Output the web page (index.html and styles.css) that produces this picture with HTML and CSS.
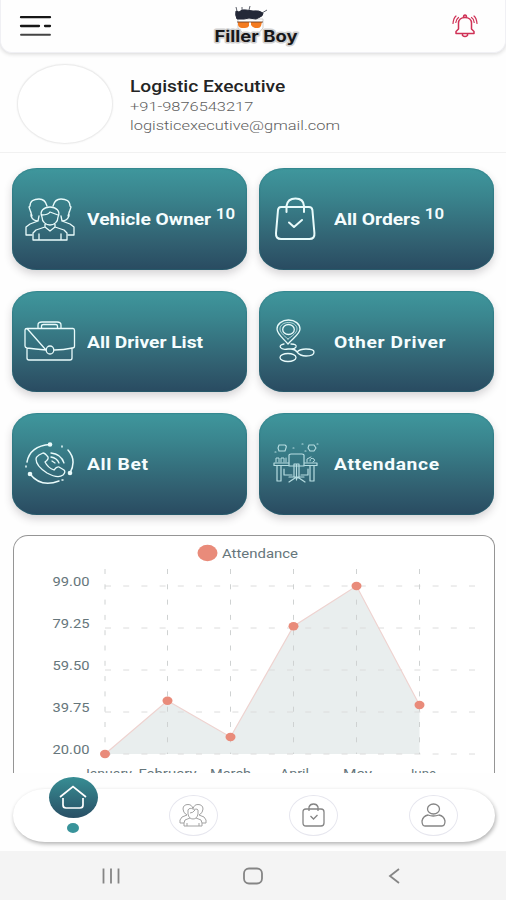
FILE: index.html
```
<!DOCTYPE html>
<html lang="en">
<head>
    <title>Filler Boy</title>
    <meta charset="UTF-8">
    <meta name="viewport" content="width=device-width, initial-scale=1">
    <link rel="stylesheet" href="styles.css">
</head>
<body>
    <div class="screen">
        <header class="header">
            <svg class="menu" width="34" height="24" viewBox="0 0 34 24">
                <path d="M2 3.2H31M2 12H20M26 12H31" stroke="#171717" stroke-width="2.3" stroke-linecap="round"/>
                <path d="M2 20.8H31" stroke="#444" stroke-width="1.9" stroke-linecap="round"/>
            </svg>
            <svg class="logo" width="96" height="46" viewBox="0 0 96 46">
                <path d="M32 16h25v9l-6 7H39l-7-7z" fill="#fff" stroke="#d0d0d0"/>
                <path d="M31 16q-2-4-1-8l3 1q3-3 7-2l7 1q6-1 10 2 0 3-3 4l-4 2-7-1-5 1z" fill="#242938" stroke="#242938" stroke-linejoin="round"/>
                <path d="M31 8l-1-4M36 7V4M43 7l1-4M56 10l5-3" stroke="#4a4e59" stroke-width=".9"/>
                <path d="M32 19h11v4q-1 2-4 2h-3q-3 0-4-3zM45 19h11l-1 4q-1 2-3 2h-3q-3-1-4-3z" fill="#f47b20"/>
                <path d="M31 19H57" stroke="#704126" stroke-width=".9"/>
                <text class="logo-text" x="8.500" y="39" textLength="83" lengthAdjust="spacingAndGlyphs">Filler Boy</text>
            </svg>
            <svg class="bell" width="28" height="26" viewBox="0 0 28 26" fill="none" stroke="#cf3156" stroke-width="1.500" stroke-linecap="round" stroke-linejoin="round">
                <path d="M5 20.500V18.500l2.500-2.500v-6c0-3 2.500-5.500 6.500-5.500s6.500 2.500 6.500 5.500v6l2.500 2.500v2zM12.500 4.500q0-2.500 1.500-2.500t1.500 2.500M11.500 21v1.500q2.500 2 5 0V21"/>
                <path d="M5 3Q2.500 5 2 10.500M7.500 4.500Q5 6.500 4.800 9.500M23 3q2.500 2 3 7.500M20.500 4.500q2.500 1.500 2.700 5" stroke-width="1.200"/>
            </svg>
        </header>

        <section class="profile">
            <div class="avatar"></div>
            <div class="profile-info">
                <div class="name">Logistic Executive</div>
                <div class="contact">+91-9876543217</div>
                <div class="contact">logisticexecutive@gmail.com</div>
            </div>
        </section>

        <main class="tiles">
            <div class="tile">
                <svg class="tile-icon" width="52" height="44" viewBox="0 0 52 44">
                    <path d="M15 19l-1 5-8 3-4 3v8h6M8 19l-2-6-1-3 1-1c0-5 4-7 9-7 5 0 7 3 8 7M7 15v4q2 5 7 5M45 15v4q-2 5-7 5M37 19l1 5 8 3 4 3v8h-6M44 19l2-6 1-3-1-1c0-5-4-7-9-7-5 0-7 3-8 7"/>
                    <path d="M18 20c-3-6 2-10 8-10s11 4 8 10c0 5-4 8-8 8s-8-3-8-8zM18 18q6 0 8-3l8 3M21 27v3l-9 3-3 3v7h34v-7l-3-3-9-3v-3M21 30l5 4 5-4M15 43v-6M37 43v-6"/>
                </svg>
                <div class="tile-label"><span>Vehicle Owner</span><sup>10</sup></div>
            </div>
            <div class="tile">
                <svg class="tile-icon bag" width="52" height="44" viewBox="0 0 52 44">
                    <path d="M10 10h28q3 0 3.400 3l2 23q.6 6-5 6H10q-5.500 0-5-6l2-23q.4-3 3-3zM15.500 15V9q1-7.500 9-7.500T33 9v6M18 25.500l5 4.500 8-7"/>
                </svg>
                <div class="tile-label"><span>All Orders</span><sup>10</sup></div>
            </div>
            <div class="tile">
                <svg class="tile-icon" width="52" height="44" viewBox="0 0 52 44">
                    <path d="M3 9.500h46q1.500 0 1.500 2V27q0 2-2 2-9 2-18 2M22 31Q11 30 3 29q-2-.5-2-2V11q0-1.500 2-1.500zM3 30v9q0 2 2 2h41q2 0 2-2V29"/>
                    <path d="M14 9V6q0-3 4-3h15q4 0 4 3v3M17.500 9V7q0-1.500 2-1.500h12q2 0 2 1.500v2"/>
                    <ellipse cx="26" cy="31" rx="3.800" ry="4"/>
                </svg>
                <div class="tile-label"><span>All Driver List</span></div>
            </div>
            <div class="tile">
                <svg class="tile-icon" width="52" height="44" viewBox="0 0 52 44">
                    <path d="M17 25C12 19 6 15 6 10c0-5 5-9 11.500-9S29 5 29 10c0 5-7 9-12 15z"/>
                    <path d="M17 20C12 16 9 13 9 10c0-4 4-6.500 8.500-6.500S26 6 26 10c0 4-5 7-9 10z" stroke-width=".7"/>
                    <ellipse cx="17.500" cy="10.500" rx="5.800" ry="5"/>
                    <path d="M13 25q-5 1-3.500 3.500T17 30h3q4 0 6 3M20 25q6 0 5 3-1 2-5 2M26 33q3-3 9-3 8 0 8 3 0 4-8 4-6 0-9-4z"/>
                    <ellipse cx="17" cy="38.500" rx="8" ry="4"/>
                </svg>
                <div class="tile-label"><span class="wide">Other Driver</span></div>
            </div>
            <div class="tile">
                <svg class="tile-icon" width="52" height="44" viewBox="0 0 52 44">
                    <path d="M3 20Q6 4 26 2.500M44 8q9 10 2 23M35 39Q17 46 6 32M2 24v1M38 4v1M38 38h1" stroke-width="1.500"/>
                    <path d="M15 13l4-2q2 0 5 4 1 2-3 5 3 6 9 8 3-4 5-3l5 3q2 2-1 5-5 4-16-2-11-7-11-14 0-2 3-4zM27 11q10 1 13 10M27 15q6 1 8 6M28 19l3 2"/>
                    <g class="solid"><circle cx="26" cy="2.500" r="2.300"/><circle cx="46" cy="31" r="2.300"/><circle cx="6" cy="32" r="2.300"/></g>
                </svg>
                <div class="tile-label"><span class="wide">All Bet</span></div>
            </div>
            <div class="tile">
                <svg class="tile-icon desk" width="52" height="44" viewBox="0 0 52 44">
                    <path d="M3 21h15M33 21h13v2.500H34M17 23.500H3V21M6 24v15h4V24M39 24v15h4V24M18 24V13q0-1 2-1h11q2 0 2 1v11zM23 22h5v13h-5zM13 27v6h8M37 27v6h-7M25.500 22v16M18 40l6-4h4l6 4M18 35h15"/>
                    <path d="M5 20v-4h3v4M10 20v-4h3v4M15 20v-4M36 20v-3l4-2M39 19q0-4 4-2 2 2-1 3" stroke-width="1"/>
                    <path d="M8 3h6q2 1 1 3l-1 3H8L7 6zM38 3h5l2 3-2 3h-4l-2-3zM4 10h1M22 6h1M31 2h1M34 9h1M46 2h1" stroke-width="1.100"/>
                </svg>
                <div class="tile-label"><span class="wide">Attendance</span></div>
            </div>
        </main>

        <section class="chart-card">
            <svg class="chart" width="480" height="260" viewBox="0 0 480 260">
                <polygon class="area" points="91,218 153.500,164.700 216.500,201 279.500,90.300 342.500,50 405.500,169 405.500,218"/>
                <path class="grid-h" d="M91 50H468M91 92H468M91 134H468M91 176H468M91 218H468"/>
                <path class="grid-v" d="M91 33V218M153.500 33V218M216.500 33V218M279.500 33V218M342.500 33V218M405.500 33V218"/>
                <polyline class="line" points="91,218 153.500,164.700 216.500,201 279.500,90.300 342.500,50 405.500,169"/>
                <g class="dots">
                    <ellipse cx="91" cy="218" rx="5" ry="4.200"/>
                    <ellipse cx="153.500" cy="164.700" rx="5" ry="4.200"/>
                    <ellipse cx="216.500" cy="201" rx="5" ry="4.200"/>
                    <ellipse cx="279.500" cy="90.300" rx="5" ry="4.200"/>
                    <ellipse cx="342.500" cy="50" rx="5" ry="4.200"/>
                    <ellipse cx="405.500" cy="169" rx="5" ry="4.200"/>
                    <ellipse cx="193.500" cy="17" rx="10" ry="8.300"/>
                </g>
                <g class="axis">
                    <text x="208" y="21.500" textLength="76" lengthAdjust="spacingAndGlyphs">Attendance</text>
                    <text x="38.500" y="50" textLength="37" lengthAdjust="spacingAndGlyphs">99.00</text>
                    <text x="38.500" y="92" textLength="37" lengthAdjust="spacingAndGlyphs">79.25</text>
                    <text x="38.500" y="134" textLength="37" lengthAdjust="spacingAndGlyphs">59.50</text>
                    <text x="38.500" y="176" textLength="37" lengthAdjust="spacingAndGlyphs">39.75</text>
                    <text x="38.500" y="218" textLength="37" lengthAdjust="spacingAndGlyphs">20.00</text>
                    <text x="68" y="242" textLength="50" lengthAdjust="spacingAndGlyphs">January</text>
                    <text x="124.500" y="242" textLength="58" lengthAdjust="spacingAndGlyphs">February</text>
                    <text x="196" y="242" textLength="41" lengthAdjust="spacingAndGlyphs">March</text>
                    <text x="266" y="242" textLength="29" lengthAdjust="spacingAndGlyphs">April</text>
                    <text x="329" y="242" textLength="29" lengthAdjust="spacingAndGlyphs">May</text>
                    <text x="393" y="242" textLength="29" lengthAdjust="spacingAndGlyphs">June</text>
                </g>
            </svg>
        </section>

        <nav class="tabs">
            <div class="tab active">
                <div class="tab-circle">
                    <svg width="30" height="26" viewBox="0 0 30 26">
                        <path d="M2 13L15 2.500 28 13M5 14v7q0 3 3 3h14q3 0 3-3v-7"/>
                    </svg>
                </div>
                <div class="tab-dot"></div>
            </div>
            <div class="tab">
                <div class="tab-circle">
                    <svg width="30" height="26" viewBox="0 0 30 26">
                        <path d="M9 13q-4-2-4-6c0-3 2-4.500 5-4.500s4 1.500 5 4c1-2.500 2-4 5-4s5 1.500 5 4.500q0 4-4 6M10 8c1-2 3-2 5-1s4-1 5 1v4q-1 5-5 5t-5-5zM12 11q3 0 5-3M9 13l-5 2-2 3v3h4l1-3 5-2M21 13l5 2 2 3v3h-4l-1-3-5-2M6 21v3h18v-3M9 24v-3M21 24v-3"/>
                    </svg>
                </div>
            </div>
            <div class="tab">
                <div class="tab-circle">
                    <svg width="30" height="26" viewBox="0 0 30 26" class="dark">
                        <path d="M7 7h15q3 0 3 3v11q0 3-3 3H7q-3 0-3-3V10q0-3 3-3zM10 9V5q1-3 4.500-3T19 5v4M11.500 14l3 3 4-4"/>
                    </svg>
                </div>
            </div>
            <div class="tab">
                <div class="tab-circle">
                    <svg width="30" height="26" viewBox="0 0 30 26" class="dark">
                        <ellipse cx="14.500" cy="7" rx="6" ry="5"/>
                        <path d="M9 13q5 2 11 0 5 1 6 6 0 5-3 5H6q-3 0-3-5 1-5 6-6z"/>
                    </svg>
                </div>
            </div>
        </nav>

        <footer class="system-bar">
            <svg width="22" height="18" viewBox="0 0 22 18"><path d="M3.500 1.500v15M11 1.500v15M18.500 1.500v15"/></svg>
            <svg width="22" height="18" viewBox="0 0 22 18"><rect x="2" y="1.500" width="18" height="15" rx="5"/></svg>
            <svg width="22" height="18" viewBox="0 0 22 18"><path d="M15 2L6 9l9 7"/></svg>
        </footer>
    </div>
</body>
</html>
```

FILE: styles.css
```
html, body {
    margin: 0;
    padding: 0;
    height: 100%;
    background: #ffffff;
}

.screen {
    display: flex;
    flex-direction: column;
    width: 506px;
    height: 900px;
    overflow: hidden;
    font-family: Roboto, "Noto Sans", sans-serif;
    background: #fefefe;
}

svg {
    display: block;
    fill: none;
}

.header {
    display: grid;
    grid-template-columns: 1fr auto 1fr;
    align-items: start;
    box-sizing: border-box;
    height: 53px;
    padding: 0 26px 0 18px;
    background: #fefefe;
    border: 1px solid #f0f0f4;
    border-top: none;
    border-radius: 0 0 12px 12px;
    box-shadow: 0 1px 4px rgba(0, 0, 0, 0.16);
}

.menu {
    margin-top: 14px;
}

.logo {
    margin-top: 3px;
    margin-left: 10px;
}

.logo-text {
    font-family: Inter, sans-serif;
    font-size: 15.5px;
    font-weight: 700;
    fill: #171719;
    stroke: #d0d0d0;
    stroke-width: 3px;
    stroke-linejoin: round;
    paint-order: stroke;
}

.bell {
    margin-top: 13px;
    justify-self: end;
}

.profile {
    display: flex;
    box-sizing: border-box;
    height: 100px;
    padding: 11px 17px;
    border-bottom: 1px solid #f1f1f1;
}

.avatar {
    box-sizing: border-box;
    width: 96px;
    height: 80px;
    border: 1px solid #ececec;
    border-radius: 50%;
    background: #ffffff;
    box-shadow: 0 0 2px #ededed;
}

.profile-info {
    margin: 13px 0 0 17px;
    white-space: nowrap;
    transform: scaleX(1.2);
    transform-origin: left;
    width: 174px;
}

.name {
    height: 20px;
    font-size: 16px;
    line-height: 20px;
    font-weight: 500;
    color: #242424;
}

.contact {
    height: 19px;
    font-size: 13.7px;
    line-height: 18px;
    font-weight: 300;
    color: #5e5e5e;
}

.tiles {
    display: grid;
    grid-template-columns: 235px 235px;
    gap: 21px 12px;
    padding: 15px 12px 0;
}

.tile {
    display: flex;
    align-items: center;
    box-sizing: border-box;
    height: 101.5px;
    padding-left: 12px;
    border-radius: 25px / 21px;
    background: linear-gradient(to bottom, #3f979d 0%, #3a858e 27%, #315f70 74%, #294b61 100%);
    box-shadow: 0 4px 8px rgba(50, 40, 50, 0.2), inset 0 0 1px 1px rgba(38, 112, 122, 0.4);
}

.tile-icon {
    stroke: #e9fbfb;
    stroke-width: 1.3px;
    stroke-linejoin: round;
    stroke-linecap: round;
}

.bag {
    stroke-width: 2px;
}

.desk {
    stroke: #b7dde1;
    stroke-width: 1.2px;
}

.solid {
    fill: #e9fbfb;
    stroke: none;
}

.tile-label {
    display: flex;
    margin: 3px 0 0 10.5px;
    font-size: 16px;
    line-height: 20px;
    font-weight: 700;
    color: #f5fdfe;
    white-space: nowrap;
    transform: scaleX(1.2);
    transform-origin: left;
}

.tile-label .wide {
    letter-spacing: 0.55px;
}

.tile-label sup {
    margin: -6px 0 0 4px;
    font-size: 14px;
    line-height: 20px;
    font-weight: 600;
    vertical-align: baseline;
}

.chart-card {
    box-sizing: border-box;
    width: 482px;
    height: 238px;
    margin: 20.5px 0 0 12.5px;
    overflow: hidden;
    border: 1px solid #959595;
    border-bottom: none;
    border-radius: 15px 12px 0 0;
    background: #ffffff;
}

.area {
    fill: #e9eeee;
}

.grid-h {
    stroke: #dcdcdc;
    stroke-dasharray: 6 12.2;
}

.grid-v {
    stroke: #cfd2d2;
    stroke-dasharray: 5 10.3;
}

.line {
    stroke: #eed3d0;
    stroke-width: 1.2px;
}

.dots {
    fill: #e98b7a;
}

.axis {
    fill: #66767b;
    font-size: 12.5px;
}

.tabs {
    display: flex;
    justify-content: space-between;
    box-sizing: border-box;
    width: 482px;
    height: 53px;
    margin: 15.5px 0 0 12.5px;
    padding: 0 36px;
    border-radius: 32px / 26.5px;
    background: #ffffff;
    box-shadow: 1px 2px 4px rgba(0, 0, 0, 0.3);
}

.tab {
    display: flex;
    flex-direction: column;
    align-items: center;
    padding-top: 6px;
}

.tab-circle {
    display: flex;
    align-items: center;
    justify-content: center;
    box-sizing: border-box;
    width: 49px;
    height: 41px;
    border: 1px solid #e6e6ee;
    border-radius: 50%;
    stroke: #a2a2a2;
    stroke-width: 1px;
}

.tab-circle .dark {
    stroke: #858585;
    stroke-width: 1.3px;
}

.active {
    padding: 0;
    margin-top: -12px;
}

.active .tab-circle {
    border: none;
    background: linear-gradient(to bottom, #378e94, #294f65);
    stroke: #ffffff;
    stroke-width: 1.7px;
}

.tab-dot {
    width: 12px;
    height: 10px;
    margin-top: 5px;
    border-radius: 50%;
    background: #38939a;
}

.system-bar {
    display: flex;
    justify-content: space-between;
    align-items: center;
    box-sizing: border-box;
    height: 49px;
    margin-top: auto;
    padding: 0 100px;
    background: #f4f4f4;
    stroke: #858585;
    stroke-width: 1.8px;
}
```
